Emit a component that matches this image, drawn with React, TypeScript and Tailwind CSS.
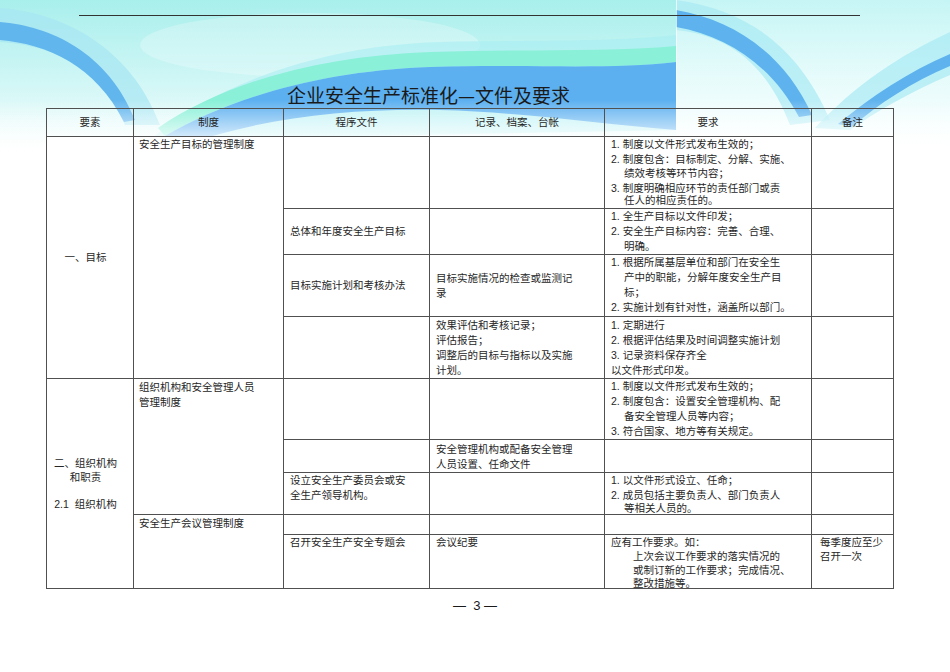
import React from 'react';

type Line = { t: string; h?: string; ind?: string };

const txt = { fontFamily: '"Liberation Sans", "Noto Sans CJK SC", sans-serif' };

const r1Req: Line[] = [
  { t: '1. 制度以文件形式发布生效的；' },
  { t: '2. 制度包含：目标制定、分解、实施、', h: 'h-[14px] leading-[14px]' },
  { t: '绩效考核等环节内容；', ind: 'pl-[13px]' },
  { t: '3. 制度明确相应环节的责任部门或责', h: 'h-[14px] leading-[14px]' },
  { t: '任人的相应责任的。', ind: 'pl-[13px]', h: 'h-[11px] leading-[11px]' },
];
const r2Req: Line[] = [
  { t: '1. 全生产目标以文件印发；' },
  { t: '2. 安全生产目标内容：完善、合理、' },
  { t: '明确。', ind: 'pl-[13px]' },
];
const r3Req: Line[] = [
  { t: '1. 根据所属基层单位和部门在安全生' },
  { t: '产中的职能，分解年度安全生产目', ind: 'pl-[13px]' },
  { t: '标；', ind: 'pl-[13px]' },
  { t: '2. 实施计划有针对性，涵盖所以部门。' },
];
const r4Rec: Line[] = [
  { t: '效果评估和考核记录；' },
  { t: '评估报告；' },
  { t: '调整后的目标与指标以及实施' },
  { t: '计划。', h: 'h-[14px] leading-[14px]' },
];
const r4Req: Line[] = [
  { t: '1. 定期进行' },
  { t: '2.  根据评估结果及时间调整实施计划' },
  { t: '3. 记录资料保存齐全' },
  { t: '以文件形式印发。', h: 'h-[14px] leading-[14px]' },
];
const r5Req: Line[] = [
  { t: '1. 制度以文件形式发布生效的；' },
  { t: '2. 制度包含：设置安全管理机构、配' },
  { t: '备安全管理人员等内容；', ind: 'pl-[13px]' },
  { t: '3. 符合国家、地方等有关规定。' },
];
const r7Req: Line[] = [
  { t: '1. 以文件形式设立、任命；' },
  { t: '2. 成员包括主要负责人、部门负责人' },
  { t: '等相关人员的。', ind: 'pl-[13px]', h: 'h-[11px] leading-[11px]' },
];
const r9Req: Line[] = [
  { t: '应有工作要求。如：', h: 'h-[14px] leading-[14px]' },
  { t: '上次会议工作要求的落实情况的', ind: 'pl-[22px]', h: 'h-[14px] leading-[14px]' },
  { t: '或制订新的工作要求；完成情况、', ind: 'pl-[22px]', h: 'h-[14px] leading-[14px]' },
  { t: '整改措施等。', ind: 'pl-[22px]', h: 'h-[11px] leading-[12px]' },
];

function Lines({ lines }: { lines: Line[] }) {
  return (
    <>
      {lines.map((l, i) => (
        <div key={i} className={`${l.h ?? 'h-[15px] leading-[15px]'} ${l.ind ?? ''} whitespace-nowrap`}>
          {l.t}
        </div>
      ))}
    </>
  );
}

const cell = 'border border-[#505050] p-0 align-top bg-white';
const cellM = 'border border-[#505050] p-0 align-middle bg-white';
const pad = 'pl-[6px] pr-[4px]';

function Background() {
  return (
    <svg className="absolute left-0 top-0" width="950" height="150" viewBox="0 0 950 150">
      <defs>
        <linearGradient id="bgL" x1="0" y1="0" x2="0" y2="1">
          <stop offset="0" stopColor="#a8efec" />
          <stop offset="0.5" stopColor="#cdf6f5" />
          <stop offset="1" stopColor="#f4fdfd" />
        </linearGradient>
        <linearGradient id="bgR" x1="0" y1="0" x2="0" y2="1">
          <stop offset="0" stopColor="#c6f5f5" />
          <stop offset="0.5" stopColor="#e6fbfb" />
          <stop offset="1" stopColor="#fbffff" />
        </linearGradient>
        <linearGradient id="fade" x1="0" y1="0" x2="0" y2="1">
          <stop offset="0" stopColor="#ffffff" stopOpacity="0" />
          <stop offset="1" stopColor="#ffffff" stopOpacity="1" />
        </linearGradient>
        <clipPath id="cl">
          <rect x="0" y="0" width="676" height="150" />
        </clipPath>
        <clipPath id="cr">
          <rect x="676" y="0" width="274" height="150" />
        </clipPath>
      </defs>
      <g clipPath="url(#cl)">
        <rect width="676" height="150" fill="url(#bgL)" />
        <ellipse cx="310" cy="45" rx="170" ry="32" fill="#ffffff" opacity="0.25" />
        <path d="M0,8 C60,12 130,45 160,125 L125,125 C100,65 50,45 0,42 Z" fill="#a6e6f2" opacity="0.7" />
        <path d="M0,22 C50,26 108,52 135,120 L124,122 C96,66 48,44 0,40 Z" fill="#62b6ee" />
        <path d="M150,140 C220,80 330,45 440,42 C540,40 610,42 676,35 L676,130 L150,140 Z" fill="#a6ecf2" opacity="0.55" />
        <path d="M158,128 C225,82 320,56 430,52 C530,49 610,52 676,46 L676,62 C610,70 530,64 430,67 C320,71 230,98 165,136 Z" fill="#8af0d8" />
        <path d="M165,136 C230,98 320,71 430,67 C530,64 610,70 676,62 L676,130 C600,124 520,112 440,110 C350,108 260,118 185,145 Z" fill="#5cb0f0" />
      </g>
      <g clipPath="url(#cr)">
        <rect x="676" width="274" height="150" fill="url(#bgR)" />
        <path d="M676,0 C750,10 800,50 830,120 L790,125 C765,60 725,35 676,30 Z" fill="#a8eaf3" opacity="0.7" />
        <path d="M676,10 C735,20 785,55 812,115 L799,117 C772,66 728,36 676,27 Z" fill="#5eb3ee" />
        <path d="M815,128 C855,85 900,55 950,32 L950,75 C910,92 875,112 850,130 Z" fill="#a8eaf3" opacity="0.7" />
        <path d="M838,124 C872,96 908,72 950,54 L950,66 C912,82 878,104 852,127 Z" fill="#5eb3ee" />
      </g>
      <rect x="676" y="0" width="1" height="130" fill="#ffffff" opacity="0.7" />
      <rect x="0" y="100" width="950" height="50" fill="url(#fade)" />
    </svg>
  );
}

export default function App() {
  return (
    <div className="relative w-[950px] h-[672px] bg-white overflow-hidden text-[#262626]" style={txt}>
      <Background />
      <div className="relative">
        <div className="pt-[15px] pl-[79px]">
          <div className="h-px w-[781px] bg-[#333333]" />
        </div>
        <div
          className="mt-[67px] pl-[287px] h-[24px] leading-[24px] text-[19px] text-[#1a1a1a]"
          style={{ fontFamily: '"Noto Sans CJK SC", sans-serif' }}
        >
          企业安全生产标准化—文件及要求
        </div>
        <div className="mt-[1px] pl-[46px]">
          <table className="border-collapse table-fixed w-[847px] text-[10.5px]">
            <colgroup>
              <col className="w-[87px]" />
              <col className="w-[150px]" />
              <col className="w-[146px]" />
              <col className="w-[175px]" />
              <col className="w-[207px]" />
              <col className="w-[82px]" />
            </colgroup>
            <tbody>
              <tr className="h-[28px]">
                {['要素', '制度', '程序文件', '记录、档案、台帐', '要求', '备注'].map((h) => (
                  <td key={h} className="border border-[#505050] p-0 text-center align-middle">
                    {h}
                  </td>
                ))}
              </tr>

              <tr className="h-[72px]">
                <td rowSpan={4} className={`${cellM} text-center pr-[9px]`}>
                  一、目标
                </td>
                <td rowSpan={4} className={`${cell} pl-[5px]`}>
                  <div className="h-[15px] leading-[15px]">安全生产目标的管理制度</div>
                </td>
                <td className={cell}></td>
                <td className={cell}></td>
                <td className={`${cell} ${pad}`}>
                  <Lines lines={r1Req} />
                </td>
                <td className={cell}></td>
              </tr>

              <tr className="h-[46px]">
                <td className={`${cellM} ${pad}`}>总体和年度安全生产目标</td>
                <td className={cell}></td>
                <td className={`${cell} ${pad}`}>
                  <Lines lines={r2Req} />
                </td>
                <td className={cell}></td>
              </tr>

              <tr className="h-[62px]">
                <td className={`${cellM} ${pad}`}>目标实施计划和考核办法</td>
                <td className={`${cellM} ${pad}`}>
                  <Lines lines={[{ t: '目标实施情况的检查或监测记' }, { t: '录' }]} />
                </td>
                <td className={`${cell} ${pad}`}>
                  <Lines lines={r3Req} />
                </td>
                <td className={cell}></td>
              </tr>

              <tr className="h-[62px]">
                <td className={cell}></td>
                <td className={`${cell} ${pad} pt-[1px]`}>
                  <Lines lines={r4Rec} />
                </td>
                <td className={`${cell} ${pad} pt-[1px]`}>
                  <Lines lines={r4Req} />
                </td>
                <td className={cell}></td>
              </tr>

              <tr className="h-[61px]">
                <td rowSpan={5} className={`${cellM} text-center pr-[9px]`}>
                  <div className="h-[14px] leading-[14px]">二、组织机构</div>
                  <div className="h-[14px] leading-[14px]">和职责</div>
                  <div className="h-[13px]" />
                  <div className="h-[14px] leading-[14px] whitespace-nowrap">2.1&nbsp;&nbsp;组织机构</div>
                </td>
                <td rowSpan={3} className={`${cell} pl-[5px] pt-[1px]`}>
                  <Lines lines={[{ t: '组织机构和安全管理人员' }, { t: '管理制度' }]} />
                </td>
                <td className={cell}></td>
                <td className={cell}></td>
                <td className={`${cell} ${pad}`}>
                  <Lines lines={r5Req} />
                </td>
                <td className={cell}></td>
              </tr>

              <tr className="h-[33px]">
                <td className={cell}></td>
                <td className={`${cell} ${pad} pt-[2px]`}>
                  <Lines lines={[{ t: '安全管理机构或配备安全管理' }, { t: '人员设置、任命文件' }]} />
                </td>
                <td className={cell}></td>
                <td className={cell}></td>
              </tr>

              <tr className="h-[42px]">
                <td className={`${cell} ${pad}`}>
                  <Lines lines={[{ t: '设立安全生产委员会或安' }, { t: '全生产领导机构。' }]} />
                </td>
                <td className={cell}></td>
                <td className={`${cell} ${pad}`}>
                  <Lines lines={r7Req} />
                </td>
                <td className={cell}></td>
              </tr>

              <tr className="h-[20px]">
                <td rowSpan={2} className={`${cell} pl-[5px] pt-[1px]`}>
                  <div className="h-[15px] leading-[15px]">安全生产会议管理制度</div>
                </td>
                <td className={cell}></td>
                <td className={cell}></td>
                <td className={cell}></td>
                <td className={cell}></td>
              </tr>

              <tr className="h-[54px]">
                <td className={`${cell} ${pad}`}>
                  <div className="h-[14px] leading-[14px]">召开安全生产安全专题会</div>
                </td>
                <td className={`${cell} ${pad}`}>
                  <div className="h-[14px] leading-[14px]">会议纪要</div>
                </td>
                <td className={`${cell} ${pad}`}>
                  <Lines lines={r9Req} />
                </td>
                <td className={`${cell} pl-[8px]`}>
                  <Lines
                    lines={[
                      { t: '每季度应至少', h: 'h-[14px] leading-[14px]' },
                      { t: '召开一次', h: 'h-[14px] leading-[14px]' },
                    ]}
                  />
                </td>
              </tr>
            </tbody>
          </table>
        </div>
        <div className="mt-[9px] h-[16px] leading-[16px] text-center text-[13px] text-[#1a1a1a]">—&nbsp;&nbsp;3&nbsp;—</div>
      </div>
    </div>
  );
}
